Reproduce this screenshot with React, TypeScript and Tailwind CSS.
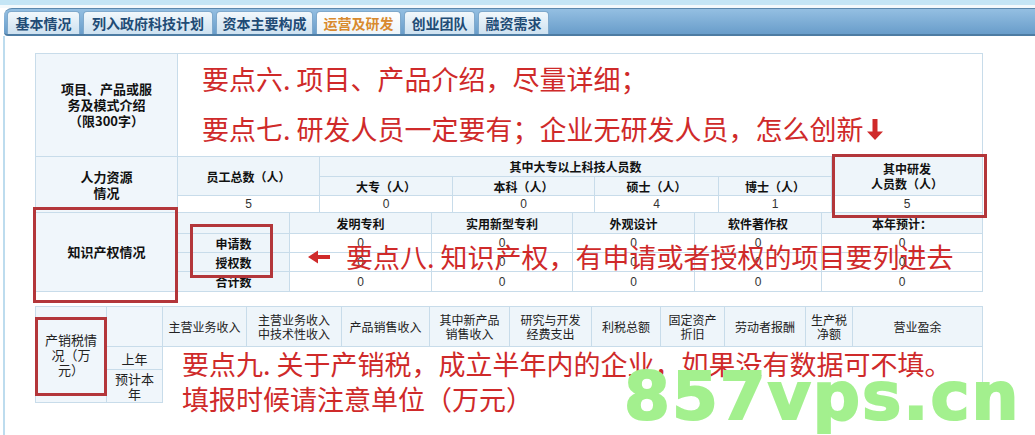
import React from "react";

const ln = "border-r border-b border-[#c8dcea]";
const lab = `${ln} bg-[#f0f6fb] flex items-center justify-center text-center font-bold text-[#111] text-[13px] leading-[16px]`;
const hd = `${ln} bg-[#eef5fa] flex items-center justify-center text-center font-bold text-[#111] text-[12px] leading-[15px]`;
const val = `${ln} bg-white flex items-center justify-center text-[12px] text-[#333] font-['Liberation_Sans',sans-serif]`;
const hd3 = `${ln} bg-[#eef5fa] flex items-center justify-center text-center text-[#222] text-[12px] leading-[14px]`;
const lab3 = `${ln} bg-[#f0f6fb] flex items-center justify-center text-center text-[#222] text-[13px] leading-[15px]`;
const red = "text-[#cf2a2a] text-[27px] leading-[36px] whitespace-nowrap";
const box = "absolute border-[3px] border-[#b3363a]";

const tabs: { t: string; w: string; active?: boolean }[] = [
  { t: "基本情况", w: "w-[73px]" },
  { t: "列入政府科技计划", w: "w-[130px]" },
  { t: "资本主要构成", w: "w-[97px]" },
  { t: "运营及研发", w: "w-[85px]", active: true },
  { t: "创业团队", w: "w-[71px]" },
  { t: "融资需求", w: "w-[71px]" },
];

function DownArrow() {
  return (
    <svg width="18" height="24" viewBox="0 0 18 24" className="ml-[2px]">
      <path d="M6.5 2h5v12.5h5.5L9 23 1 14.5h5.5z" fill="#cf2a2a" />
    </svg>
  );
}

function LeftArrow() {
  return (
    <svg width="24" height="14" viewBox="0 0 24 14" className="mr-[15px]">
      <path d="M1 7l10-6.5v4.5h12v4H11v4.5z" fill="#cf2a2a" />
    </svg>
  );
}

export default function App() {
  return (
    <div className="relative w-[1035px] h-[435px] overflow-hidden bg-white font-['Noto_Sans_CJK_SC','Noto_Sans',sans-serif]">
      <div className="h-[5px] bg-[#c4e5f5]" />
      <div className="h-[3px] bg-[#f3f9fc]" />
      <div className="ml-[4px] h-[28px] rounded-tl-[8px] rounded-bl-[4px] border-t border-[#5a88ad] border-b-2 border-b-[#4d7ca3] bg-linear-to-b from-[#94bfe2] to-[#699dca] flex items-end gap-[3px] pl-[3px]">
        {tabs.map((tb) => (
          <div
            key={tb.t}
            className={
              tb.active
                ? `${tb.w} h-[23px] rounded-t-[4px] border border-b-0 border-[#7fa9cc] bg-linear-to-b from-white to-[#eef5f9] flex items-center justify-center text-[14px] font-bold text-[#d98a2e]`
                : `${tb.w} h-[23px] rounded-t-[4px] border border-b-0 border-[#7fa9cc] bg-linear-to-b from-[#f2f8fc] to-[#cde1f0] flex items-center justify-center text-[14px] font-bold text-[#214b75]`
            }
          >
            {tb.t}
          </div>
        ))}
      </div>

      <div className="ml-[3px] h-[399px] border-l-2 border-[#bddcee] pl-[30px] pt-[17px]">
        {/* Main table */}
        <div className="w-[948px] border-l border-t border-[#c8dcea]">
          {/* Section 1 */}
          <div className="flex h-[103px]">
            <div className={`${lab} w-[142px]`}>
              项目、产品或服
              <br />
              务及模式介绍
              <br />
              （限300字）
            </div>
            <div className={`${ln} flex-1 bg-white flex flex-col pl-[24px] pt-[7px] gap-[14px]`}>
              <div className={red}>要点六. 项目、产品介绍，尽量详细；</div>
              <div className={`${red} flex items-center`}>
                要点七. 研发人员一定要有；企业无研发人员，怎么创新
                <DownArrow />
              </div>
            </div>
          </div>
          {/* Section 2 HR */}
          <div className="flex h-[56px]">
            <div className={`${lab} w-[142px]`}>
              人力资源
              <br />
              情况
            </div>
            <div className="grid grid-cols-[142px_133px_142px_124px_113px_151px] grid-rows-[20px_19px_17px]">
              <div className={`${hd} row-span-2`}>员工总数（人）</div>
              <div className={`${hd} col-span-4`}>其中大专以上科技人员数</div>
              <div className={`${hd} row-span-2`}>
                其中研发
                <br />
                人员数（人）
              </div>
              <div className={hd}>大专（人）</div>
              <div className={hd}>本科（人）</div>
              <div className={hd}>硕士（人）</div>
              <div className={hd}>博士（人）</div>
              {["5", "0", "0", "4", "1", "5"].map((v, i) => (
                <div key={i} className={val}>
                  {v}
                </div>
              ))}
            </div>
          </div>
          {/* Section 3 IP */}
          <div className="flex h-[79px]">
            <div className={`${lab} w-[142px]`}>知识产权情况</div>
            <div className="grid grid-cols-[112px_142px_141px_122px_127px_161px] grid-rows-[21px_19px_19px_20px]">
              <div className={hd}></div>
              <div className={hd}>发明专利</div>
              <div className={hd}>实用新型专利</div>
              <div className={hd}>外观设计</div>
              <div className={hd}>软件著作权</div>
              <div className={hd}>本年预计：</div>
              {["申请数", "授权数", "合计数"].map((r) => (
                <React.Fragment key={r}>
                  <div className={hd}>{r}</div>
                  {[0, 1, 2, 3, 4].map((c) => (
                    <div key={c} className={val}>
                      0
                    </div>
                  ))}
                </React.Fragment>
              ))}
            </div>
          </div>
        </div>

        {/* Production / sales / tax table */}
        <div className="mt-[14px] w-[948px] border-l border-t border-[#c8dcea] grid grid-cols-[71px_56px_84px_95px_88px_80px_82px_69px_64px_81px_47px_130px] grid-rows-[40px_23px_33px]">
          <div className={`${lab3} row-span-3`}>
            产销税情
            <br />
            况（万
            <br />
            元）
          </div>
          <div className={lab3}></div>
          <div className={hd3}>主营业务收入</div>
          <div className={hd3}>
            主营业务收入
            <br />
            中技术性收入
          </div>
          <div className={hd3}>产品销售收入</div>
          <div className={hd3}>
            其中新产品
            <br />
            销售收入
          </div>
          <div className={hd3}>
            研究与开发
            <br />
            经费支出
          </div>
          <div className={hd3}>利税总额</div>
          <div className={hd3}>
            固定资产
            <br />
            折旧
          </div>
          <div className={hd3}>劳动者报酬</div>
          <div className={hd3}>
            生产税
            <br />
            净额
          </div>
          <div className={hd3}>营业盈余</div>
          <div className={lab3}>上年</div>
          <div className="col-span-10 row-span-2 bg-white border-r border-[#c8dcea]"></div>
          <div className={lab3}>
            预计本
            <br />
            年
          </div>
        </div>
      </div>

      {/* Annotations over the tables */}
      <div className={`absolute left-[307px] top-[239px] ${red} flex items-center`}>
        <LeftArrow />
        要点八. 知识产权，有申请或者授权的项目要列进去
      </div>
      <div className={`absolute left-[182px] top-[346px] ${red}`}>要点九. 关于产销税，成立半年内的企业，如果没有数据可不填。</div>
      <div className={`absolute left-[182px] top-[381px] ${red}`}>填报时候请注意单位（万元）</div>

      {/* Highlight boxes */}
      <div className={`${box} left-[33px] top-[207px] w-[145px] h-[96px]`} />
      <div className={`${box} left-[190px] top-[224px] w-[83px] h-[54px]`} />
      <div className={`${box} left-[832px] top-[154px] w-[155px] h-[64px]`} />
      <div className={`${box} left-[35px] top-[317px] w-[72px] h-[79px]`} />

      {/* Watermark */}
      <div className="absolute left-[624px] top-[364px] text-[66px] leading-[66px] font-bold tracking-[2px] text-[#a3f08e] [-webkit-text-stroke:2px_#a3f08e] font-['DejaVu_Sans',sans-serif] whitespace-nowrap">
        857vps.cn
      </div>
    </div>
  );
}
